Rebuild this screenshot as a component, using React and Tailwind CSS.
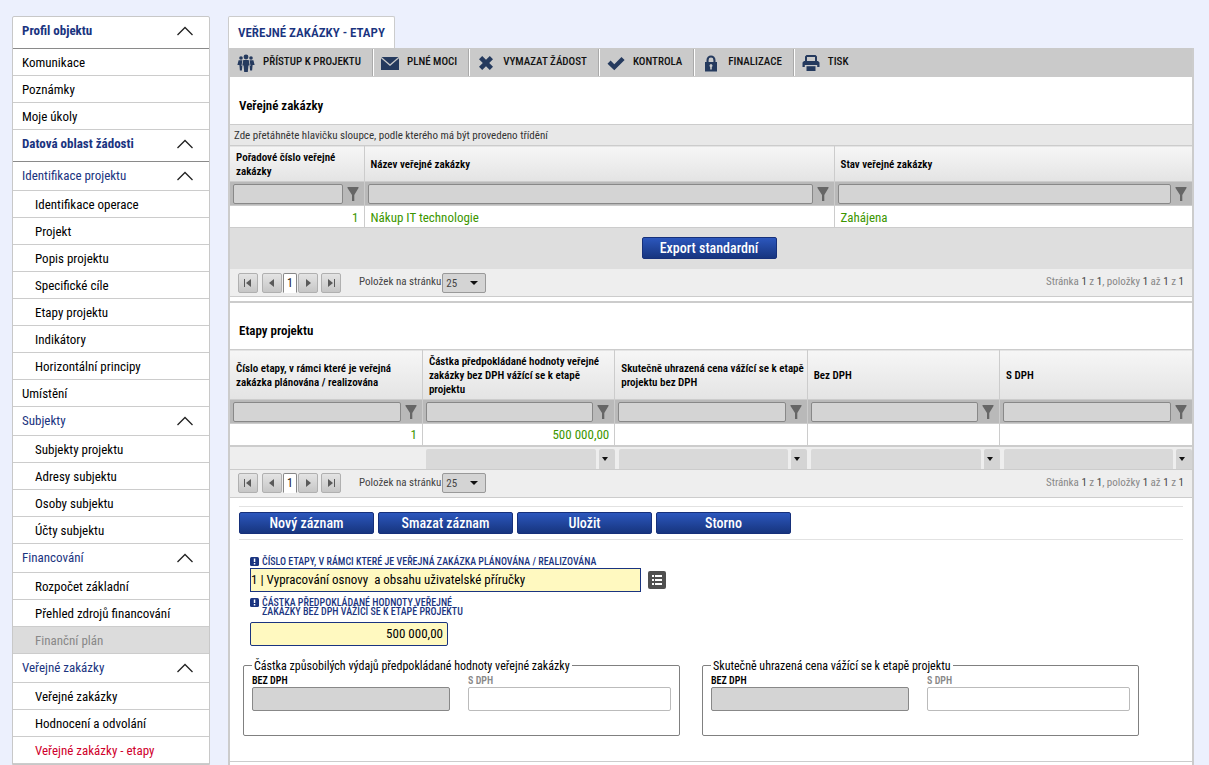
import { useState } from "react";
import clsx from "clsx";

const menu = [
  { label: "Profil objektu", type: "main" },
  { label: "Komunikace" },
  { label: "Poznámky" },
  { label: "Moje úkoly" },
  { label: "Datová oblast žádosti", type: "main" },
  { label: "Identifikace projektu", type: "group" },
  { label: "Identifikace operace", sub: true },
  { label: "Projekt", sub: true },
  { label: "Popis projektu", sub: true },
  { label: "Specifické cíle", sub: true },
  { label: "Etapy projektu", sub: true },
  { label: "Indikátory", sub: true },
  { label: "Horizontální principy", sub: true },
  { label: "Umístění" },
  { label: "Subjekty", type: "group" },
  { label: "Subjekty projektu", sub: true },
  { label: "Adresy subjektu", sub: true },
  { label: "Osoby subjektu", sub: true },
  { label: "Účty subjektu", sub: true },
  { label: "Financování", type: "group" },
  { label: "Rozpočet základní", sub: true },
  { label: "Přehled zdrojů financování", sub: true },
  { label: "Finanční plán", sub: true, disabled: true },
  { label: "Veřejné zakázky", type: "group" },
  { label: "Veřejné zakázky", sub: true },
  { label: "Hodnocení a odvolání", sub: true },
  { label: "Veřejné zakázky - etapy", sub: true, active: true },
];

const toolIcons = {
  people: (
    <>
      <circle cx="9" cy="3" r="2.4" />
      <circle cx="4" cy="4" r="1.8" />
      <circle cx="14" cy="4" r="1.8" />
      <path d="M6.3 6h5.4l1 5.500h-1.300l-.6 6.500H7.200l-.6-6.500H5.300z" />
      <path d="M1.600 6.300h3.800l-.9 5.700h.8l-.4 4.500H2.900l-.5-5.500H.4zM16.400 6.300h-3.800l.9 5.700h-.8l.4 4.500h2l.5-5.500h2z" />
    </>
  ),
  mail: (
    <>
      <path d="M.5 3h17L9 10.200z" />
      <path d="M0 4.300 9 12l9-7.700V16H0z" />
    </>
  ),
  cross: <path d="M2 5.200 5.200 2 9 5.800 12.800 2 16 5.200 12.200 9l3.800 3.800-3.200 3.200L9 12.200 5.200 16 2 12.800 5.800 9z" />,
  check: <path d="M.5 9.700 3.600 6.600 7.300 10.300 14.500 3 17.600 6 7.300 16.200z" />,
  lock: (
    <path
      fillRule="evenodd"
      d="M3 8h1.500V6a4.500 4.500 0 0 1 9 0v2H15v9.500H3zm3.600 0h4.800V6a2.400 2.400 0 0 0-4.800 0zM8.200 13v2.500h1.600V13a1.500 1.500 0 1 0-1.600 0z"
    />
  ),
  printer: (
    <>
      <path fillRule="evenodd" d="M4.500 1h9l1.500 1.500V8H3V2.500zM5 3v4h8V3z" />
      <path d="M2 7h14l1.500 1.500V13h-2.300v-2H2.800v2H.5V8.500z" />
      <path d="M4.500 12.200h9V17h-9z" />
    </>
  ),
};

const tools = [
  { label: "PŘÍSTUP K PROJEKTU", icon: "people" },
  { label: "PLNÉ MOCI", icon: "mail" },
  { label: "VYMAZAT ŽÁDOST", icon: "cross" },
  { label: "KONTROLA", icon: "check" },
  { label: "FINALIZACE", icon: "lock" },
  { label: "TISK", icon: "printer" },
];

function Sidebar() {
  return (
    <nav className="w-[198px] shrink-0 border border-[#c8c8c8] rounded-t-xs bg-white text-[13px]">
      {menu.map((item, i) =>
        item.type ? (
          <button
            key={i}
            className={clsx(
              "flex w-full items-center justify-between border-b pl-[9px] pr-4 text-[#1a3480]",
              item.type === "main" && "h-8 border-[#8a8a8a] pb-1 font-bold",
              item.type === "group" && "h-[29px] border-[#ccc]"
            )}
          >
            {item.label}
            <svg className="h-2.5 w-4" viewBox="0 0 16 10" fill="none" stroke="#222" strokeWidth="1.3">
              <path d="M.5 9 8 1.500 15.500 9" />
            </svg>
          </button>
        ) : (
          <a
            key={i}
            href="#"
            className={clsx(
              "flex h-[27px] items-center border-b border-[#ccc] pt-0.5",
              item.sub ? "pl-[22px]" : "pl-[9px]",
              item.disabled && "bg-[#dcdcdc] text-[#888]",
              item.active && "text-[#d0002c]"
            )}
          >
            {item.label}
          </a>
        )
      )}
    </nav>
  );
}

function Toolbar() {
  return (
    <div className="flex h-[29px] bg-[#cacaca] py-px">
      {tools.map((tool, i) => (
        <button
          key={tool.label}
          className={clsx(
            "flex items-center gap-2 pl-[7px] pr-[11px] text-[11px] font-medium text-[#111]",
            i > 0 && "border-l border-white",
            i < tools.length - 1 && "border-r border-r-[#aaa]"
          )}
        >
          <svg className="size-[18px]" viewBox="0 0 18 18" fill="#253a5e">
            {toolIcons[tool.icon]}
          </svg>
          {tool.label}
        </button>
      ))}
    </div>
  );
}

function FilterRow({ columns }) {
  return (
    <tr className="border-b border-[#ccc] bg-[#b9b9b9]">
      {columns.map((c) => (
        <td key={c} className="h-6 border-r border-[#ccc] py-0 pl-[3px] pr-[5px] last:border-r-0">
          <div className="flex items-center gap-1">
            <input
              aria-label={c}
              className="h-5 min-w-0 flex-1 rounded-xs border border-[#888] bg-[#d4d4d4] px-1"
            />
            <button aria-label={"Filtr " + c} className="shrink-0">
              <svg className="h-3.5 w-3" viewBox="0 0 12 14" fill="#666">
                <path d="M.5 0h11v1L7.300 8v6H5V8L.5 1z" />
              </svg>
            </button>
          </div>
        </td>
      ))}
    </tr>
  );
}

function Grid({ columns, widths, rows, headHeight, children }) {
  return (
    <table className="w-full table-fixed border-collapse">
      <colgroup>
        {widths.map((w, i) => (
          <col key={i} className={w} />
        ))}
      </colgroup>
      <thead>
        <tr className={clsx("border-y border-[#ccc] bg-linear-to-b from-[#f6f6f6] to-[#e4e4e4]", headHeight)}>
          {columns.map((c) => (
            <th
              key={c}
              className="border-r border-[#ccc] pb-0 pl-1.5 pr-px pt-0.5 text-left text-[11px]/[14px] font-semibold last:border-r-0"
            >
              {c}
            </th>
          ))}
        </tr>
      </thead>
      <tbody>
        <FilterRow columns={columns} />
        {rows.map((row, r) => (
          <tr key={r} className="border-b border-[#ccc] text-[13px]/[18px] text-[#3c9600]">
            {row.map((cell, i) => (
              <td
                key={i}
                className={clsx(
                  "h-[22px] border-r border-[#ccc] pb-0 pl-1.5 pr-[5px] pt-0.5 last:border-r-0",
                  /^[\d ,]+$/.test(cell) && "text-right"
                )}
              >
                {cell}
              </td>
            ))}
          </tr>
        ))}
        {children}
      </tbody>
    </table>
  );
}

function PagerButton({ label, path }) {
  return (
    <button
      aria-label={label}
      className="flex size-5 items-center justify-center rounded-xs border border-[#b0b0b0] bg-linear-to-b from-[#e4e4e4] to-[#c6c6c6]"
    >
      <svg className="size-2.5" viewBox="0 0 10 10" fill="#5a5a5a">
        <path d={path} />
      </svg>
    </button>
  );
}

function Pager({ id }) {
  const [size, setSize] = useState("25");

  return (
    <div className="flex h-7 items-center border-b border-[#ccc] bg-[#eee] px-2 text-[11px] text-[#444]">
      <PagerButton label="První" path="M1 1h1v8H1zM8 1v8L3 5z" />
      <div className="ml-1 flex items-center">
        <PagerButton label="Předchozí" path="M7 1v8L2 5z" />
        <button className="mx-px h-5 w-3.5 rounded-t-xs border border-[#888] border-b-transparent bg-white text-xs text-[#222]">1</button>
        <PagerButton label="Další" path="M3 1v8l5-4z" />
      </div>
      <div className="ml-[3px]">
        <PagerButton label="Poslední" path="M8 1h1v8H8zM2 1v8l5-4z" />
      </div>
      <label htmlFor={id} className="ml-[18px] mr-px">
        Položek na stránku
      </label>
      <div className="relative">
        <select
          id={id}
          value={size}
          onChange={(e) => setSize(e.target.value)}
          className="block h-5 w-11 appearance-none rounded-xs border border-[#999] bg-[#d4d4d4] px-[3px] pt-px text-[11px]/[18px]"
        >
          <option>25</option>
          <option>50</option>
          <option>100</option>
        </select>
        <svg className="pointer-events-none absolute right-2 top-2 h-1 w-2" viewBox="0 0 8 4" fill="#111">
          <path d="M0 0h8L4 4z" />
        </svg>
      </div>
      <span className="ml-auto text-[#888]">
        Stránka <b className="font-normal text-[#444]">1</b> z <b className="font-normal text-[#444]">1</b>, položky{" "}
        <b className="font-normal text-[#444]">1</b> až <b className="font-normal text-[#444]">1</b> z{" "}
        <b className="font-normal text-[#444]">1</b>
      </span>
    </div>
  );
}

function BlueButton({ children }) {
  return (
    <button className="h-[22px] w-[135px] rounded-xs border border-[#16307a] bg-linear-to-b from-[#2c57bd] to-[#17357f] text-sm/[20px] font-medium text-white">
      {children}
    </button>
  );
}

function RequiredLabel({ htmlFor, children }) {
  return (
    <label htmlFor={htmlFor} className="flex items-start gap-[3px] text-[10px]/[9px] font-medium text-[#1a3480]">
      <svg className="size-[9px] shrink-0" viewBox="0 0 9 9">
        <rect width="9" height="9" rx="1.500" fill="#1a3480" />
        <path d="M3.800 1.500h1.500v3.500H3.800zM3.800 6h1.500v1.500H3.800z" fill="#fff" />
      </svg>
      <span>{children}</span>
    </label>
  );
}

function PriceFieldset({ id, legend }) {
  return (
    <fieldset className="h-[78px] w-[437px] rounded-xs border border-[#808080] px-2">
      <legend className="px-0.5 text-xs/[16px]">{legend}</legend>
      <div className="flex gap-[18px]">
        <div className="w-[198px]">
          <label htmlFor={id + "-bez"} className="block text-[10px]/[13px] font-semibold">
            BEZ DPH
          </label>
          <input id={id + "-bez"} disabled className="block h-6 w-full rounded-xs border border-[#888] bg-[#d4d4d4]" />
        </div>
        <div className="w-[203px]">
          <label htmlFor={id + "-s"} className="block text-[10px]/[13px] font-semibold text-[#888]">
            S DPH
          </label>
          <input id={id + "-s"} className="block h-6 w-full rounded-xs border border-[#bbb] bg-white px-1" />
        </div>
      </div>
    </fieldset>
  );
}

const stageColumns = [
  "Číslo etapy, v rámci které je veřejná zakázka plánována / realizována",
  "Částka předpokládané hodnoty veřejné zakázky bez DPH vážící se k etapě projektu",
  "Skutečně uhrazená cena vážící se k etapě projektu bez DPH",
  "Bez DPH",
  "S DPH",
];

function App() {
  const [stage, setStage] = useState("1 | Vypracování osnovy\u00a0 a obsahu uživatelské příručky");
  const [amount, setAmount] = useState("500 000,00");

  return (
    <div className="flex min-h-screen gap-[18px] bg-[#ecf0fd] pl-3 pr-[15px] pt-4 font-['Roboto_Condensed','Liberation_Sans_Narrow',Roboto,sans-serif] text-black">
      <Sidebar />

      <main className="flex min-w-0 flex-1 flex-col">
        <h1 className="flex h-8 items-center self-start rounded-t-xs border border-b-0 border-[#ccc] bg-white px-[9px] text-[13px] font-semibold text-[#1a3480]">
          VEŘEJNÉ ZAKÁZKY - ETAPY
        </h1>

        <div className="flex-1 border-x-2 border-[#ccc] bg-white">
          <Toolbar />

          {/* Veřejné zakázky */}
          <h2 className="flex h-[47px] items-center px-[9px] pt-2.5 text-[13px] font-semibold">Veřejné zakázky</h2>
          <div className="flex h-[21px] items-center border-t border-[#ccc] bg-[#e8e8e8] px-1 pt-0.5 text-[11px] text-[#333]">
            Zde přetáhněte hlavičku sloupce, podle kterého má být provedeno třídění
          </div>
          <Grid
            columns={["Pořadové číslo veřejné zakázky", "Název veřejné zakázky", "Stav veřejné zakázky"]}
            widths={["w-[134px]", "w-[470px]", "w-auto"]}
            headHeight="h-9"
            rows={[["1", "Nákup IT technologie", "Zahájena"]]}
          />
          <div className="flex h-[41px] items-center justify-center bg-[#dedede] pb-0.5 pr-1">
            <BlueButton>Export standardní</BlueButton>
          </div>
          <Pager id="size-contracts" />

          {/* Etapy projektu */}
          <h2 className="mt-1 flex h-12 items-center border-t-2 border-[#ccc] px-[9px] pt-2.5 text-[13px] font-semibold">
            Etapy projektu
          </h2>
          <Grid
            columns={stageColumns}
            widths={["w-1/5", "w-1/5", "w-1/5", "w-1/5", "w-1/5"]}
            headHeight="h-[50px]"
            rows={[["1", "500 000,00", "", "", ""]]}
          >
            <tr className="border-b border-t-2 border-[#ccc] bg-[#eee]">
              {stageColumns.map((c, i) => (
                <td key={c} className="h-[23px] pb-0 pl-1 pt-0.5">
                  {i > 0 && (
                    <div className="flex gap-[3px]">
                      <span className="h-5 flex-1 rounded-t-xs bg-[#d9d9d9]" />
                      <button
                        aria-label={"Souhrn " + c}
                        className="flex h-5 w-4 items-center rounded-t-xs bg-[#d4d4d4] pl-[3px]"
                      >
                        <svg className="h-1 w-1.5" viewBox="0 0 6 4" fill="#111">
                          <path d="M0 0h6L3 4z" />
                        </svg>
                      </button>
                    </div>
                  )}
                </td>
              ))}
            </tr>
          </Grid>
          <Pager id="size-stages" />

          {/* Formulář */}
          <form className="border-b border-[#ccc] pb-[25px] pt-2" onSubmit={(e) => e.preventDefault()}>
            <div className="mx-[9px] flex gap-1 border-y border-[#e2e2e2] py-[5px]">
              <BlueButton>Nový záznam</BlueButton>
              <BlueButton>Smazat záznam</BlueButton>
              <BlueButton>Uložit</BlueButton>
              <BlueButton>Storno</BlueButton>
            </div>

            <div className="px-5 pt-[17px]">
              <RequiredLabel htmlFor="stage">
                ČÍSLO ETAPY, V RÁMCI KTERÉ JE VEŘEJNÁ ZAKÁZKA PLÁNOVÁNA / REALIZOVÁNA
              </RequiredLabel>
              <div className="mt-0.5 flex items-center gap-[7px]">
                <input
                  id="stage"
                  value={stage}
                  onChange={(e) => setStage(e.target.value)}
                  className="h-6 w-[391px] border border-[#1a3480] bg-[#fff9c0] text-[13px]"
                />
                <button
                  aria-label="Vybrat etapu"
                  className="flex size-[18px] items-center justify-center rounded-xs bg-[#505050]"
                >
                  <svg className="size-2.5" viewBox="0 0 10 10" fill="#fff">
                    <path d="M0 0h2v2H0zM3 0h7v2H3zM0 4h2v2H0zM3 4h7v2H3zM0 8h2v2H0zM3 8h7v2H3z" />
                  </svg>
                </button>
              </div>
              <div className="mt-1.5">
                <RequiredLabel htmlFor="amount">
                  ČÁSTKA PŘEDPOKLÁDANÉ HODNOTY VEŘEJNÉ
                  <br />
                  ZAKÁZKY BEZ DPH VÁŽÍCÍ SE K ETAPĚ PROJEKTU
                </RequiredLabel>
              </div>
              <input
                id="amount"
                value={amount}
                onChange={(e) => setAmount(e.target.value)}
                className="mt-[6px] block h-6 w-[198px] rounded-xs border border-[#1a3480] bg-[#fff9c0] px-1 text-right text-[13px]"
              />
            </div>

            <div className="flex gap-[22px] px-[13px] pt-3">
              <PriceFieldset id="eligible" legend="Částka způsobilých výdajů předpokládané hodnoty veřejné zakázky" />
              <PriceFieldset id="paid" legend="Skutečně uhrazená cena vážící se k etapě projektu" />
            </div>
          </form>
        </div>
      </main>
    </div>
  );
}

export default App;
